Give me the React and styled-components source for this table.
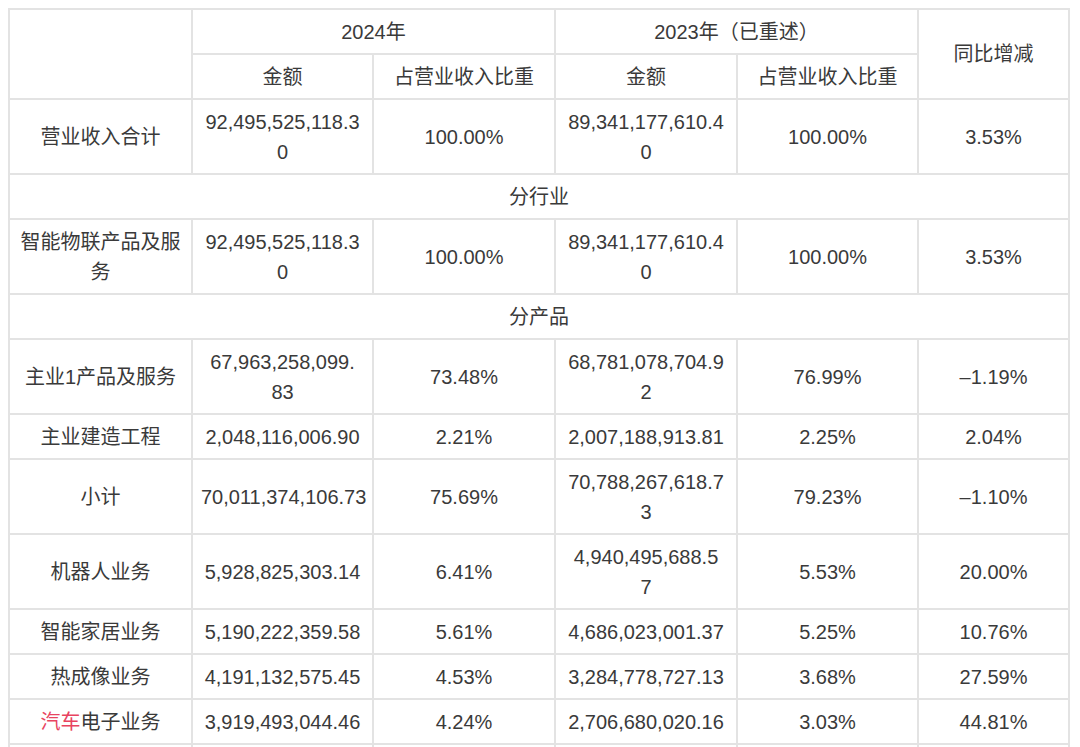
import React from 'react'
import styled, { createGlobalStyle } from 'styled-components'

const GlobalStyle = createGlobalStyle`
body {
  margin: 8px;
  background: #fff;
  font-family: "Liberation Sans", "Noto Sans CJK SC", sans-serif;
  color: #3a3a3a;
}
`

const Table = styled.table`
width: 1062px;
table-layout: fixed;
border-collapse: collapse;
font-size: 20px;
line-height: 30px;
`

const Cell = styled.td`
border: 2px solid #e3e3e3;
padding: 6.5px 8px;
text-align: center;
vertical-align: middle;
white-space: pre;
overflow: hidden;
`

const Head = styled(Cell).attrs({ as: 'th' })`
font-weight: normal;
`

const Section = styled(Cell)`
height: 30px;
`

const Hl = styled.span`
color: #e8445f;
`

const rows = [
  { label: '营业收入合计', cells: ['92,495,525,118.3\n0', '100.00%', '89,341,177,610.4\n0', '100.00%', '3.53%'] },
  { section: '分行业' },
  { label: '智能物联产品及服\n务', cells: ['92,495,525,118.3\n0', '100.00%', '89,341,177,610.4\n0', '100.00%', '3.53%'] },
  { section: '分产品' },
  { label: '主业1产品及服务', cells: ['67,963,258,099.\n83', '73.48%', '68,781,078,704.9\n2', '76.99%', '–1.19%'] },
  { label: '主业建造工程', cells: ['2,048,116,006.90', '2.21%', '2,007,188,913.81', '2.25%', '2.04%'] },
  { label: '小计', cells: ['70,011,374,106.73', '75.69%', '70,788,267,618.7\n3', '79.23%', '–1.10%'] },
  { label: '机器人业务', cells: ['5,928,825,303.14', '6.41%', '4,940,495,688.5\n7', '5.53%', '20.00%'] },
  { label: '智能家居业务', cells: ['5,190,222,359.58', '5.61%', '4,686,023,001.37', '5.25%', '10.76%'] },
  { label: '热成像业务', cells: ['4,191,132,575.45', '4.53%', '3,284,778,727.13', '3.68%', '27.59%'] },
  { label: <><Hl>汽车</Hl>电子业务</>, cells: ['3,919,493,044.46', '4.24%', '2,706,680,020.16', '3.03%', '44.81%'] },
  { label: '', cells: ['', '', '', '', ''] },
]

const App = () => {
  return (
    <>
      <GlobalStyle />
      <Table>
        <colgroup>
          <col style={{ width: 183 }} />
          <col style={{ width: 181 }} />
          <col style={{ width: 182 }} />
          <col style={{ width: 182 }} />
          <col style={{ width: 181 }} />
          <col />
        </colgroup>
        <thead>
          <tr>
            <Head rowSpan={2}></Head>
            <Head colSpan={2}>2024年</Head>
            <Head colSpan={2}>2023年（已重述）</Head>
            <Head rowSpan={2}>同比增减</Head>
          </tr>
          <tr>
            <Head>金额</Head>
            <Head>占营业收入比重</Head>
            <Head>金额</Head>
            <Head>占营业收入比重</Head>
          </tr>
        </thead>
        <tbody>
          {rows.map((r, i) =>
            r.section ? (
              <tr key={i}>
                <Section colSpan={6}>{r.section}</Section>
              </tr>
            ) : (
              <tr key={i}>
                <Cell>{r.label || '\u00a0'}</Cell>
                {r.cells.map((c, j) => (
                  <Cell key={j}>{c}</Cell>
                ))}
              </tr>
            )
          )}
        </tbody>
      </Table>
    </>
  )
}

export default App
